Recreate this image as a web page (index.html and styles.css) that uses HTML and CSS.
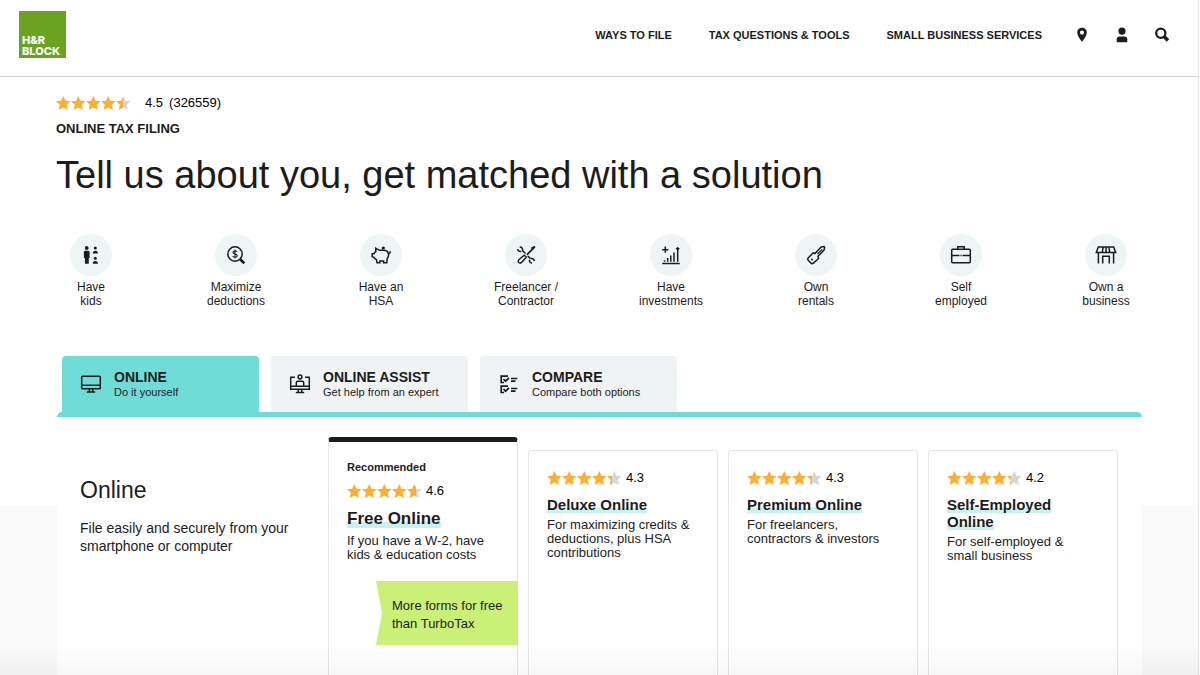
FILE: index.html
```html
<!DOCTYPE html>
<html lang="en">
<head>
<meta charset="utf-8">
<meta name="viewport" content="width=device-width, initial-scale=1">
<title>Online Tax Filing | H&amp;R Block</title>
<link rel="stylesheet" href="styles.css">
</head>
<body>
<svg class="defs" aria-hidden="true">
  <defs>
    <linearGradient id="part-2"><stop offset="0.25" stop-color="#fbb034"/><stop offset="0.25" stop-color="#d6d6da"/></linearGradient>
    <linearGradient id="part-3"><stop offset="0.33" stop-color="#fbb034"/><stop offset="0.33" stop-color="#d6d6da"/></linearGradient>
    <linearGradient id="part-5"><stop offset="0.5" stop-color="#fbb034"/><stop offset="0.5" stop-color="#d6d6da"/></linearGradient>
    <linearGradient id="part-6"><stop offset="0.6" stop-color="#fbb034"/><stop offset="0.6" stop-color="#d6d6da"/></linearGradient>
    <path id="star" d="M7.300 0L9.500 4.800L14.600 5.300L10.800 8.800L11.900 14L7.300 11.400L2.700 14L3.800 8.800L0 5.300L5.100 4.800Z"/>
    <g id="four-stars" fill="#fbb034"><use href="#star"/><use href="#star" x="15"/><use href="#star" x="30"/><use href="#star" x="45"/></g>
  </defs>
</svg>
<div class="page">
  <header class="header">
    <a class="logo" href="#" aria-label="H&amp;R Block home"><span>H&amp;R</span><span>BLOCK</span></a>
    <nav class="nav" aria-label="Main">
      <a href="#">WAYS TO FILE</a>
      <a href="#">TAX QUESTIONS &amp; TOOLS</a>
      <a href="#">SMALL BUSINESS SERVICES</a>
    </nav>
    <div class="tools">
      <button type="button" aria-label="Find an office"><svg viewBox="0 0 16 16"><path fill-rule="evenodd" d="M8 0.800C5.200 0.800 3.200 2.900 3.200 5.500C3.200 8.900 6.200 12.200 8 15C9.800 12.200 12.800 8.900 12.800 5.500C12.800 2.900 10.800 0.800 8 0.800ZM8 3.500A2.100 2.100 0 1 1 8 7.700A2.100 2.100 0 1 1 8 3.500Z"/></svg></button>
      <button type="button" aria-label="Sign in"><svg viewBox="0 0 16 16"><circle cx="8" cy="4.100" r="3.600"/><path d="M2.700 15.300V12.500Q2.700 9.500 5.700 9.500H10.300Q13.300 9.500 13.300 12.500V15.300Z"/></svg></button>
      <button type="button" aria-label="Search"><svg viewBox="0 0 16 16"><circle cx="6.800" cy="6.300" r="4.600" fill="none" stroke="#1c1c1c" stroke-width="2.300"/><path d="M9.800 9.300L14 13.500" stroke="#1c1c1c" stroke-width="3.400"/></svg></button>
    </div>
  </header>

  <main class="main">
    <section class="hero">
      <div class="rating rating-wide">
        <svg class="stars" viewBox="0 0 75 14" role="img" aria-label="4.5 out of 5 stars"><use href="#four-stars"/><use href="#star" x="60" fill="url(#part-5)"/></svg>
        <span class="score">4.5</span><span>(326559)</span>
      </div>
      <p class="eyebrow">ONLINE TAX FILING</p>
      <h1>Tell us about you, get matched with a solution</h1>

      <div class="needs">
        <button type="button" class="need">
          <span class="disc"><svg viewBox="0 0 24 24"><g fill="#1c1c1c" stroke="none"><circle cx="7.700" cy="5" r="1.900"/><path d="M6.300 7.800H9.200Q10.600 7.800 10.600 9.200V15H9.800V20.700H5.900V15H4.900V9.200Q4.900 7.800 6.300 7.800Z"/><circle cx="16.300" cy="5" r="1.500"/><path d="M13.800 10.400Q13.800 7.700 16.300 7.700Q18.900 7.700 18.900 10.400Z"/><circle cx="16.300" cy="15.300" r="1.500"/><path d="M13.800 20.700Q13.800 18 16.300 18Q18.900 18 18.900 20.700Z"/></g></svg></span>
          <span>Have<br>kids</span>
        </button>
        <button type="button" class="need">
          <span class="disc"><svg viewBox="0 0 24 24"><circle cx="11" cy="11" r="7.200"/><path d="M16.200 16.200L20.300 20.200" stroke-width="2.600"/><path d="M13.100 8.900Q12.800 8 11 8Q9 8 9 9.500Q9 10.700 11 11Q13.200 11.300 13.200 12.700Q13.200 14.100 11 14.100Q9 14.100 8.800 13M11 6.600V15.500" stroke-width="1.100"/></svg></span>
          <span>Maximize<br>deductions</span>
        </button>
        <button type="button" class="need">
          <span class="disc"><svg viewBox="0 0 24 24"><path d="M6.800 8.800V5.200L10.300 7.300H14.500Q18.700 7.500 19.500 10.700Q20 13.500 18.200 15.400L17.800 19.700H14.600V18H10.900V19.700H8L7.400 16.600Q5.500 15.700 5 14.300L3.200 13.800V10.700H5Q5.500 9.300 6.800 8.800ZM19.400 10.700Q21.500 10.200 21 8.200"/><circle cx="14.300" cy="5" r="1.600" fill="#1c1c1c" stroke="none"/></svg></span>
          <span>Have an<br>HSA</span>
        </button>
        <button type="button" class="need">
          <span class="disc"><svg viewBox="0 0 24 24"><path d="M20.800 3.800L12.800 11.800" stroke-width="1.700"/><path d="M20.800 3.500L17.600 4.600L18.300 6.400Z" fill="#1c1c1c" stroke-width="1"/><path d="M10.300 12.200L12.300 14.200L7.500 19.400Q6 20.700 4.600 19.500Q3.400 18.100 4.800 16.700Z"/><path d="M5.700 4Q8.900 4 8.600 7.700L11.500 10.500M3.600 6Q4 8.800 7.300 8.600M13.700 13L16.300 15.400M15.400 16.700Q15.200 19.700 18 20.200M16.500 15.500Q19.800 15 20.500 18"/></svg></span>
          <span>Freelancer /<br>Contractor</span>
        </button>
        <button type="button" class="need">
          <span class="disc"><svg viewBox="0 0 24 24"><path d="M3.200 20.500H20.700M6.300 3.600V9.800M3.200 6.700H9.400M5.500 17.200V18.700M8.700 15V18.700M11.800 12.500V18.700M15 9.500V18.700M18.700 5V18.700M17.200 6.200L18.700 4.700L20.200 6.200" stroke-width="1.500"/></svg></span>
          <span>Have<br>investments</span>
        </button>
        <button type="button" class="need">
          <span class="disc"><svg viewBox="0 0 24 24"><path d="M9.200 9.800L11 10.500L17.200 4L20 3.600L20.600 4.300L20.200 6.800L14 13.300L14.500 15.500L9.200 20.400Q7.800 21 6.800 20L4.200 17.300Q3.200 16 4.200 15Z"/><path d="M13.500 11L18.200 6.300" stroke-width="1.200"/><circle cx="7.900" cy="16.500" r="1" fill="#1c1c1c" stroke="none"/></svg></span>
          <span>Own<br>rentals</span>
        </button>
        <button type="button" class="need">
          <span class="disc"><svg viewBox="0 0 24 24"><rect x="2.700" y="6.300" width="18.600" height="13.400" rx="1"/><path d="M8.800 6V3.700H15.200V6M3 12.600H10.500M13.500 12.600H21M11.400 12.600H12.600"/></svg></span>
          <span>Self<br>employed</span>
        </button>
        <button type="button" class="need">
          <span class="disc"><svg viewBox="0 0 24 24"><path d="M4.300 3.900H19.700L21.700 9.500H2.300ZM9.200 4L8.300 9.500M14.800 4L15.700 9.500M12 4V9.500M4.400 9.800V20.500M19.600 9.800V20.500M8.700 20.500V13.300H15.300V20.500"/></svg></span>
          <span>Own a<br>business</span>
        </button>
      </div>
    </section>

    <div class="tabs" role="tablist" aria-label="Ways to file online">
      <button type="button" class="tab tab-active" role="tab" aria-selected="true">
        <svg viewBox="0 0 22 22"><rect x="1.700" y="3.200" width="18.600" height="12.600" rx="0.800"/><path d="M2 12.300H20M9.300 16V19M12.700 16V19M6.800 19H15.200"/></svg>
        <span class="tab-text"><strong>ONLINE</strong><span>Do it yourself</span></span>
      </button>
      <button type="button" class="tab" role="tab" aria-selected="false">
        <svg viewBox="0 0 22 22"><path d="M6 4.200H1.700V16.300H20.300V4.200H16M2 13.300H20M9.300 16.500V19.500M12.700 16.500V19.500M6.800 19.500H15.200M7.300 13V9.700Q7.300 8.300 8.700 8.300H13.300Q14.700 8.300 14.700 9.700V13"/><circle cx="11" cy="4" r="1.900"/></svg>
        <span class="tab-text"><strong>ONLINE ASSIST</strong><span>Get help from an expert</span></span>
      </button>
      <button type="button" class="tab" role="tab" aria-selected="false">
        <svg viewBox="0 0 22 22"><path d="M10 3.200H3.200V9.500H6M5.500 6L7.500 8.200L11 4.800M10 13.200H3.200V19.500H6M5.500 16L7.500 18.200L11 14.800M13 5.500H19.300M13 8.200H17.500M13 15.500H19.300M13 18.200H17.500" stroke-width="1.700"/></svg>
        <span class="tab-text"><strong>COMPARE</strong><span>Compare both options</span></span>
      </button>
    </div>
  </main>

  <section class="products">
    <div class="panel">
      <div class="intro">
        <h2>Online</h2>
        <p>File easily and securely from your smartphone or computer</p>
      </div>
      <div class="cards">
        <article class="card card-featured">
          <p class="flag">Recommended</p>
          <div class="rating"><svg class="stars" viewBox="0 0 75 14" role="img" aria-label="4.6 out of 5 stars"><use href="#four-stars"/><use href="#star" x="60" fill="url(#part-6)"/></svg><span>4.6</span></div>
          <h3><a href="#">Free Online</a></h3>
          <p class="desc">If you have a W-2, have kids &amp; education costs</p>
          <p class="ribbon">More forms for free than TurboTax</p>
        </article>
        <article class="card">
          <div class="rating"><svg class="stars" viewBox="0 0 75 14" role="img" aria-label="4.3 out of 5 stars"><use href="#four-stars"/><use href="#star" x="60" fill="url(#part-3)"/></svg><span>4.3</span></div>
          <h3><a href="#">Deluxe Online</a></h3>
          <p class="desc">For maximizing credits &amp; deductions, plus HSA contributions</p>
        </article>
        <article class="card">
          <div class="rating"><svg class="stars" viewBox="0 0 75 14" role="img" aria-label="4.3 out of 5 stars"><use href="#four-stars"/><use href="#star" x="60" fill="url(#part-3)"/></svg><span>4.3</span></div>
          <h3><a href="#">Premium Online</a></h3>
          <p class="desc">For freelancers, contractors &amp; investors</p>
        </article>
        <article class="card">
          <div class="rating"><svg class="stars" viewBox="0 0 75 14" role="img" aria-label="4.2 out of 5 stars"><use href="#four-stars"/><use href="#star" x="60" fill="url(#part-2)"/></svg><span>4.2</span></div>
          <h3><a href="#">Self-Employed Online</a></h3>
          <p class="desc">For self-employed &amp; small business</p>
        </article>
      </div>
    </div>
  </section>
</div>
<div class="shade"></div>
</body>
</html>
```

FILE: styles.css
```css
* { box-sizing: border-box; }

body {
  margin: 0;
  background: #fff;
  color: #1c1c1c;
  font-family: "Liberation Sans", Arial, sans-serif;
  font-size: 13px;
  line-height: 16px;
}

h1, h2, h3, p { margin: 0; }
a { color: inherit; text-decoration: none; }

button {
  padding: 0;
  border: 0;
  background: none;
  color: inherit;
  font: inherit;
  cursor: pointer;
}

.defs { position: absolute; width: 0; height: 0; }

.page {
  display: flex;
  flex-direction: column;
  min-height: 100vh;
  margin-right: 1px;
  border-right: 1px solid #e6e6e6;
}

/* Header */
.header {
  display: flex;
  align-items: center;
  padding: 11px 28px 18px 19px;
  border-bottom: 1px solid #d2d2d2;
}

.logo {
  display: flex;
  flex-direction: column;
  justify-content: flex-end;
  width: 47px;
  height: 47px;
  padding: 0 0 1px 3px;
  background: #6aa321;
  color: #fff;
  font: 800 11px/11px Inter, "Liberation Sans", sans-serif;
}

.nav {
  display: flex;
  gap: 37px;
  margin-left: auto;
  font-size: 11px;
  font-weight: bold;
}

.tools {
  display: flex;
  gap: 24px;
  margin-left: 32px;
}

.tools svg {
  display: block;
  width: 16px;
  height: 16px;
  fill: #1c1c1c;
}

/* Hero */
.main { padding: 0 57px 0 56px; }
.hero { padding-top: 18px; }

.rating {
  display: flex;
  align-items: center;
  gap: 4px;
  color: #000;
}

.rating-wide { gap: 6px; }
.rating-wide .score { margin-left: 8px; }
.stars { width: 75px; height: 14px; }

.eyebrow {
  margin-top: 10px;
  font-weight: bold;
}

h1 {
  margin-top: 15px;
  font-size: 38px;
  font-weight: normal;
  line-height: 46px;
}

.needs {
  display: flex;
  justify-content: space-between;
  margin-top: 36px;
}

.need {
  display: flex;
  flex-direction: column;
  align-items: center;
  gap: 4px;
  width: 70px;
  font-size: 12px;
  line-height: 14px;
}

.disc {
  display: grid;
  place-items: center;
  width: 42px;
  height: 42px;
  border-radius: 50%;
  background: #eff4f5;
}

.disc svg, .tab svg {
  width: 24px;
  height: 24px;
  fill: none;
  stroke: #1c1c1c;
  stroke-width: 1.5;
}

/* Tabs */
.tabs {
  display: flex;
  gap: 12px;
  margin-top: 48px;
  padding: 0 6px;
}

.tab {
  display: flex;
  align-items: center;
  gap: 12px;
  width: 197px;
  height: 56px;
  padding: 0 18px;
  border-radius: 4px 4px 0 0;
  background: #eff3f4;
  text-align: left;
}

.tab-active { background: #70dcd7; }
.tab svg { width: 22px; height: 22px; }

.tab-text {
  display: flex;
  flex-direction: column;
  font-size: 11px;
  line-height: 14px;
}

.tab-text strong {
  font-size: 14px;
  line-height: 16px;
}

/* Products */
.products {
  display: flex;
  flex: 1;
  padding: 0 56px 0 57px;
  background: linear-gradient(#fff 94px, #f9f9f9 94px);
}

.panel {
  display: grid;
  flex: 1;
  grid-template-columns: 248px 1fr;
  padding: 20px 24px 0 23px;
  border-top: 5px solid #70dcd7;
  border-radius: 5px 5px 0 0;
  background: #fff;
}

.intro {
  padding: 39px 30px 0 0;
  font-size: 14px;
  line-height: 18px;
}

.intro h2 {
  margin-bottom: 15px;
  font-size: 23px;
  font-weight: normal;
  line-height: 28px;
}

.cards {
  display: grid;
  grid-template-columns: repeat(4, minmax(0, 1fr));
  gap: 10px;
}

.card {
  margin-top: 13px;
  padding: 19px 22px 0 18px;
  border: 1px solid #e4e4e4;
  border-bottom: 0;
  border-radius: 4px 4px 0 0;
}

.card h3 {
  margin: 10px 0 5px;
  font-size: 15px;
  line-height: 17px;
}

.card h3 a {
  background: linear-gradient(transparent 68%, #c9f1ee 68%);
}

.desc { line-height: 14px; }

.card-featured {
  margin-top: 0;
  padding-top: 18px;
  border-top: 5px solid #1c1c1c;
}

.card-featured h3 {
  font-size: 17px;
  line-height: 20px;
}

.flag {
  margin-bottom: 9px;
  font-size: 11px;
  font-weight: bold;
  line-height: 14px;
}

.ribbon {
  margin: 19px -23px 0 29px;
  padding: 16px 12px 12px 16px;
  background: #cbf078;
  clip-path: polygon(0 0, 100% 0, 100% 100%, 0 100%, 6px 50%);
  line-height: 18px;
}

/* Soft shadow along the bottom of the viewport */
.shade {
  position: fixed;
  right: 0;
  bottom: 0;
  left: 0;
  height: 30px;
  background: linear-gradient(rgba(0, 0, 0, 0), rgba(0, 0, 0, 0.03));
  pointer-events: none;
}
```
